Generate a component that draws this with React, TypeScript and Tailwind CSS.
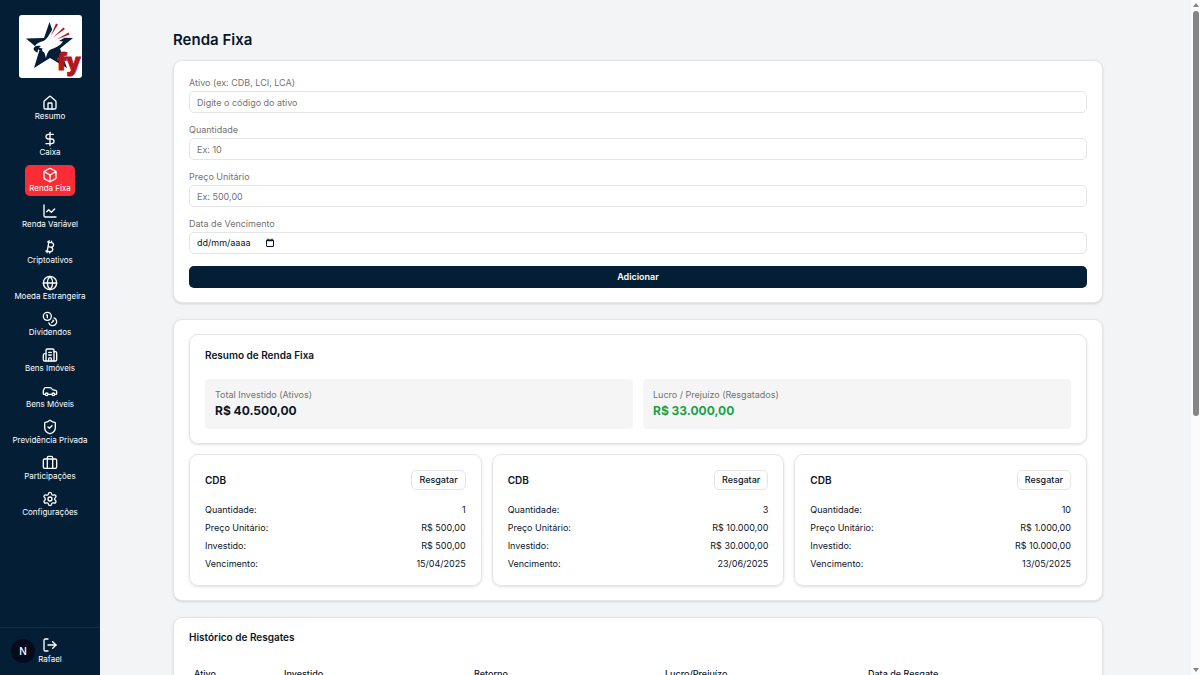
import React from 'react';
import {
  Bitcoin,
  Box,
  Briefcase,
  Building2,
  Car,
  ChartLine,
  Coins,
  DollarSign,
  Globe,
  House,
  LogOut,
  Settings,
  ShieldCheck,
  type LucideIcon,
} from 'lucide-react';

interface NavItem {
  label: string;
  icon: LucideIcon;
  active?: boolean;
}

const navItems: NavItem[] = [
  { label: 'Resumo', icon: House },
  { label: 'Caixa', icon: DollarSign },
  { label: 'Renda Fixa', icon: Box, active: true },
  { label: 'Renda Variável', icon: ChartLine },
  { label: 'Criptoativos', icon: Bitcoin },
  { label: 'Moeda Estrangeira', icon: Globe },
  { label: 'Dividendos', icon: Coins },
  { label: 'Bens Imóveis', icon: Building2 },
  { label: 'Bens Móveis', icon: Car },
  { label: 'Previdência Privada', icon: ShieldCheck },
  { label: 'Participações', icon: Briefcase },
  { label: 'Configurações', icon: Settings },
];

const ativos = [
  { nome: 'CDB', quantidade: '1', preco: 'R$ 500,00', investido: 'R$ 500,00', vencimento: '15/04/2025' },
  { nome: 'CDB', quantidade: '3', preco: 'R$ 10.000,00', investido: 'R$ 30.000,00', vencimento: '23/06/2025' },
  { nome: 'CDB', quantidade: '10', preco: 'R$ 1.000,00', investido: 'R$ 10.000,00', vencimento: '13/05/2025' },
];

const Logo: React.FC = () => (
  <svg viewBox="0 0 63 63" className="w-[63px] h-[63px] rounded-[3px] bg-white" role="img" aria-label="Starfy">
    <path
      fill="#041e36"
      d="M30.500 7 L36 22.500 L54 23 L41 33.500 L44 42 L48 53 L31 43 L15 53 L20.500 35 L7 23.500 L25 23 Z"
    />
    {/* eagle head and wing */}
    <path
      fill="#fff"
      d="M16 31 C18 28 21 27 24.500 26 C28 24 30 20 33 15 L38 7 L37 13 L45 11 L41 16 L49 15 L41 22 L46 22.500 L40 26 L44 26.500 C41 31 36 33 33 34 C29 35 28 39 27 43 C26 40 26 37 23.500 36.500 L23 34 L18 34 Z"
    />
    <path fill="#041e36" d="M14.500 34 C15 31 18 30 22 31 L20 32.500 L24.500 34 L19 34.500 L18.500 37.500 C16.500 37 15 36 14.500 34 Z" />
    <path
      fill="#b3161f"
      d="M31.500 21.500 L37 8.500 L39 9.500 Z M34 22.500 L44.500 12.500 L46 14 Z M37.500 24.500 L49.500 17.500 L50.500 19.500 Z"
    />
    <text
      x="38"
      y="55"
      fill="#b3161f"
      stroke="#b3161f"
      fontSize="23"
      fontWeight="800"
      fontFamily="'Open Sans', sans-serif"
    >
      fy
    </text>
  </svg>
);

const Sidebar: React.FC = () => (
  <aside className="w-[100px] shrink-0 flex flex-col bg-[#041e36] text-white">
    <div className="flex justify-center pt-[15px] pb-[15px]">
      <Logo />
    </div>
    <nav className="flex-1 flex flex-col items-center gap-[5px]">
      {navItems.map(({ label, icon: Icon, active }) => (
        <a
          key={label}
          href="#"
          aria-current={active ? 'page' : undefined}
          className={`flex flex-col items-center rounded-[5px] px-1 pt-[2px] pb-[3px] ${active ? 'bg-[#fb2c36]' : ''}`}
        >
          <Icon className="size-4" />
          <span className="text-[8px] leading-[10px] whitespace-nowrap">{label}</span>
        </a>
      ))}
    </nav>
    <div className="flex justify-center border-t border-[#152e45] pt-[9px] pb-[10px]">
      <button type="button" className="flex flex-col items-center">
        <LogOut className="size-4" />
        <span className="text-[8px] leading-[12px]">Rafael</span>
      </button>
    </div>
  </aside>
);

const inputClass =
  'w-full h-[22px] rounded-[5px] border border-[#e5e5e5] bg-white px-[7px] text-[9px] placeholder:text-[#737373]';

const Field: React.FC<{ id: string; label: string; children: React.ReactNode }> = ({ id, label, children }) => (
  <div className="flex flex-col gap-[2px]">
    <label htmlFor={id} className="text-[9px] leading-[13px] text-[#737373]">
      {label}
    </label>
    {children}
  </div>
);

const AtivoForm: React.FC = () => (
  <form className="flex flex-col gap-[10px] rounded-[9px] border border-[#e5e5e5] bg-white px-[15px] pt-[15px] pb-[14px] shadow-sm">
    <Field id="ativo" label="Ativo (ex: CDB, LCI, LCA)">
      <input id="ativo" type="text" placeholder="Digite o código do ativo" className={inputClass} />
    </Field>
    <Field id="quantidade" label="Quantidade">
      <input id="quantidade" type="text" placeholder="Ex: 10" className={inputClass} />
    </Field>
    <Field id="preco" label="Preço Unitário">
      <input id="preco" type="text" placeholder="Ex: 500,00" className={inputClass} />
    </Field>
    <Field id="vencimento" label="Data de Vencimento">
      <div className="flex h-[22px] items-center rounded-[5px] border border-[#e5e5e5] bg-white px-[7px]">
        <input
          id="vencimento"
          type="text"
          placeholder="dd/mm/aaaa"
          className="w-[68px] text-[9px] placeholder:text-[#0a1628]"
        />
        <button type="button" aria-label="Abrir calendário">
          <svg viewBox="0 0 10 10" className="size-[10px]" fill="none" stroke="#0a1628">
            <rect x="1.500" y="2" width="7" height="6.500" rx="0.500" />
            <path d="M1.500 2.500h7" strokeWidth="1.500" />
            <path d="M3 0.500v1M7 0.500v1" />
          </svg>
        </button>
      </div>
    </Field>
    <button type="submit" className="mt-[2px] h-[22px] rounded-[5px] bg-[#041e36] text-[9px] font-semibold text-white">
      Adicionar
    </button>
  </form>
);

const Resumo: React.FC = () => (
  <div className="rounded-[9px] border border-[#e5e5e5] px-[15px] py-[14px] shadow-sm">
    <h2 className="text-[10px] leading-[13px] font-semibold">Resumo de Renda Fixa</h2>
    <div className="mt-[17px] grid grid-cols-2 gap-[10px]">
      <div className="rounded-[4px] bg-[#f5f5f5] px-[10px] pt-[9px] pb-[10px]">
        <p className="text-[9px] leading-[14px] text-[#737373]">Total Investido (Ativos)</p>
        <p className="text-[12px] leading-[17px] font-bold">R$ 40.500,00</p>
      </div>
      <div className="rounded-[4px] bg-[#f5f5f5] px-[10px] pt-[9px] pb-[10px]">
        <p className="text-[9px] leading-[14px] text-[#737373]">Lucro / Prejuízo (Resgatados)</p>
        <p className="text-[12px] leading-[17px] font-bold text-[#16a34a]">R$ 33.000,00</p>
      </div>
    </div>
  </div>
);

const Linha: React.FC<{ label: string; value: string }> = ({ label, value }) => (
  <div className="flex justify-between">
    <dt>{label}:</dt>
    <dd>{value}</dd>
  </div>
);

export default function App() {
  return (
    <div className="relative flex h-screen overflow-hidden bg-[#f3f4f6] font-['Inter',sans-serif] text-[#0a1628]">
      <Sidebar />

      <main className="min-w-0 flex-1 overflow-hidden pr-[15px]">
        <div className="mx-auto flex max-w-[930px] flex-col gap-4 pt-[30px]">
          <div className="flex flex-col gap-[10px]">
            <h1 className="text-[15px] leading-5 font-semibold">Renda Fixa</h1>
            <AtivoForm />
          </div>

          <section className="flex flex-col gap-[10px] rounded-[9px] border border-[#e5e5e5] bg-white px-[15px] py-[14px] shadow-sm">
            <Resumo />
            <div className="grid grid-cols-3 gap-[10px]">
              {ativos.map((ativo) => (
                <article
                  key={ativo.vencimento}
                  className="rounded-[9px] border border-[#e5e5e5] px-[15px] pt-[15px] pb-3 shadow-sm"
                >
                  <div className="mb-[11px] flex items-center justify-between">
                    <h3 className="text-[10px] font-semibold">{ativo.nome}</h3>
                    <button
                      type="button"
                      className="h-5 rounded-[5px] border border-[#e5e5e5] px-[7px] text-[9px] font-medium"
                    >
                      Resgatar
                    </button>
                  </div>
                  <dl className="text-[9px] leading-[18px]">
                    <Linha label="Quantidade" value={ativo.quantidade} />
                    <Linha label="Preço Unitário" value={ativo.preco} />
                    <Linha label="Investido" value={ativo.investido} />
                    <Linha label="Vencimento" value={ativo.vencimento} />
                  </dl>
                </article>
              ))}
            </div>
          </section>

          <section className="rounded-[9px] border border-[#e5e5e5] bg-white px-[15px] pt-[13px] pb-[15px] shadow-sm">
            <h2 className="text-[10px] leading-[13px] font-semibold">Histórico de Resgates</h2>
            <table className="mt-[17px] w-full table-fixed text-left text-[9px]">
              <colgroup>
                <col className="w-[90px]" />
                <col className="w-[190px]" />
                <col className="w-[191px]" />
                <col className="w-[203px]" />
                <col />
              </colgroup>
              <thead>
                <tr className="h-[25px] border-b border-[#e5e5e5]">
                  <th className="px-[5px] font-medium">Ativo</th>
                  <th className="px-[5px] font-medium">Investido</th>
                  <th className="px-[5px] font-medium">Retorno</th>
                  <th className="px-[5px] font-medium">Lucro/Prejuízo</th>
                  <th className="px-[5px] font-medium">Data de Resgate</th>
                </tr>
              </thead>
            </table>
          </section>
        </div>
      </main>

      {/* scroll track */}
      <div className="flex w-[9px] shrink-0 flex-col items-center bg-[#fbfbfb] py-[3px]" aria-hidden="true">
        <svg viewBox="0 0 6 4" className="h-1 w-[6px]" fill="#858585">
          <path d="M3 0L6 4H0Z" />
        </svg>
        <div className="mt-1 h-[405px] w-[6px] rounded-full bg-[#858585]" />
        <svg viewBox="0 0 6 4" className="mt-auto h-1 w-[6px]" fill="#858585">
          <path d="M0 0H6L3 4Z" />
        </svg>
      </div>

      {/* dev tools badge */}
      <button
        type="button"
        aria-label="Dev tools"
        className="absolute bottom-3 left-[11px] flex size-6 items-center justify-center rounded-full bg-[#050b1c] text-[10px] font-medium text-white"
      >
        N
      </button>
    </div>
  );
}
